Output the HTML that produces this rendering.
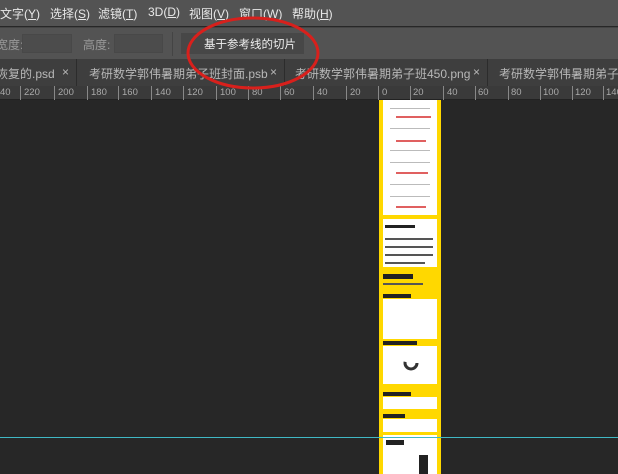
<!DOCTYPE html>
<html><head><meta charset="utf-8"><style>
*{margin:0;padding:0;box-sizing:border-box}
body{width:618px;height:474px;overflow:hidden;background:#272727;font-family:"Liberation Sans","Noto Sans CJK SC",sans-serif;position:relative}
.abs{position:absolute}
#menu{left:0;top:0;width:618px;height:26px;background:#535353;color:#e8e8e8;font-size:12px}
#menu span{position:absolute;top:5px}
#opt{left:0;top:27px;width:618px;height:32px;background:#535353;border-top:1px solid #444;color:#999;font-size:12px}
#tabs{left:0;top:59px;width:618px;height:27px;background:#3e3e3e;color:#b8b8b8;font-size:12px}
.tab{position:absolute;top:0;height:27px;border-right:1px solid #2c2c2c;padding:6px 0 0 0;white-space:nowrap}
#ruler{left:0;top:86px;width:618px;height:14px;background:#3a3a3a;border-bottom:1px solid #222;color:#aaa;font-size:9.5px}
#ruler span{position:absolute;top:1px}
.w{position:absolute;background:#fff}
.ln{position:absolute;height:1px;background:#bbb}
.r{position:absolute;height:2px;background:#e06060}
.k{position:absolute;background:#222}
</style></head><body>
<div id="menu" class="abs">
<span style="left:0">文字(<u>Y</u>)</span><span style="left:50px">选择(<u>S</u>)</span><span style="left:98px">滤镜(<u>T</u>)</span><span style="left:148px">3D(<u>D</u>)</span><span style="left:189px">视图(<u>V</u>)</span><span style="left:239px">窗口(<u>W</u>)</span><span style="left:292px">帮助(<u>H</u>)</span>
</div>
<div id="opt" class="abs">
<span class="abs" style="left:-4px;top:8px">宽度:</span>
<div class="abs" style="left:22px;top:6px;width:50px;height:19px;background:#4c4c4c;border:1px solid #484848"></div>
<span class="abs" style="left:83px;top:8px">高度:</span>
<div class="abs" style="left:114px;top:6px;width:49px;height:19px;background:#4c4c4c;border:1px solid #484848"></div>
<div class="abs" style="left:172px;top:4px;width:1px;height:24px;background:#444"></div>
<div class="abs" style="left:181px;top:5px;width:123px;height:21px;background:#474747;color:#eee;padding:3px 0 0 23px;font-size:11.5px">基于参考线的切片</div>
</div>
<div id="tabs" class="abs">
<div class="tab" style="left:-4px;width:81px">恢复的.psd <span style="position:absolute;left:66px">×</span></div>
<div class="tab" style="left:77px;width:208px;padding-left:12px">考研数学郭伟暑期弟子班封面.psb <span style="position:absolute;left:193px">×</span></div>
<div class="tab" style="left:285px;width:203px;padding-left:10px">考研数学郭伟暑期弟子班450.png <span style="position:absolute;left:188px">×</span></div>
<div class="tab" style="left:488px;width:210px;padding-left:11px">考研数学郭伟暑期弟子班</div>
</div>
<div id="ruler" class="abs">
<svg class="abs" style="left:0;top:0" width="618" height="14"><g stroke="#888" stroke-width="1">
<path d="M20.5 0V14M54.5 0V14M87.5 0V14M118.5 0V14M151.5 0V14M183.5 0V14M216.5 0V14M248.5 0V14M280.5 0V14M313.5 0V14M346.5 0V14M378.5 0V14M410.5 0V14M443.5 0V14M475.5 0V14M508.5 0V14M540.5 0V14M572.5 0V14M603.5 0V14"/></g></svg>
<span style="left:0">40</span><span style="left:24px">220</span><span style="left:58px">200</span><span style="left:91px">180</span><span style="left:122px">160</span><span style="left:155px">140</span><span style="left:187px">120</span><span style="left:220px">100</span><span style="left:252px">80</span><span style="left:284px">60</span><span style="left:317px">40</span><span style="left:350px">20</span><span style="left:382px">0</span><span style="left:413px">20</span><span style="left:447px">40</span><span style="left:478px">60</span><span style="left:511px">80</span><span style="left:543px">100</span><span style="left:575px">120</span><span style="left:606px">140</span>
</div>
<svg class="abs" style="left:184px;top:14px" width="140" height="80"><ellipse cx="69" cy="39" rx="65" ry="35" fill="none" stroke="#d8201c" stroke-width="3"/></svg>
<div class="abs" style="left:379px;top:100px;width:62px;height:374px;background:#ffd800"></div>
<div class="w" style="left:383px;top:100px;width:54px;height:115px"></div>
<div class="r" style="left:396px;top:116px;width:35px"></div><div class="r" style="left:396px;top:140px;width:30px"></div><div class="r" style="left:396px;top:172px;width:32px"></div><div class="r" style="left:396px;top:206px;width:30px"></div>
<div class="ln" style="left:390px;top:108px;width:40px"></div><div class="ln" style="left:390px;top:128px;width:40px"></div><div class="ln" style="left:390px;top:150px;width:40px"></div><div class="ln" style="left:390px;top:162px;width:40px"></div><div class="ln" style="left:390px;top:184px;width:40px"></div><div class="ln" style="left:390px;top:196px;width:40px"></div>
<div class="w" style="left:383px;top:219px;width:54px;height:48px"></div>
<div class="k" style="left:385px;top:225px;width:30px;height:3px"></div>
<div class="k" style="left:385px;top:238px;width:48px;height:2px;background:#555"></div><div class="k" style="left:385px;top:246px;width:48px;height:2px;background:#555"></div><div class="k" style="left:385px;top:254px;width:48px;height:2px;background:#555"></div><div class="k" style="left:385px;top:262px;width:40px;height:2px;background:#555"></div>
<div class="k" style="left:383px;top:274px;width:30px;height:5px"></div>
<div class="k" style="left:383px;top:283px;width:40px;height:2px;background:#555"></div>
<div class="k" style="left:383px;top:294px;width:28px;height:4px"></div>
<div class="w" style="left:383px;top:299px;width:54px;height:40px"></div>
<div class="k" style="left:383px;top:341px;width:34px;height:4px"></div>
<div class="w" style="left:383px;top:346px;width:54px;height:38px"></div>
<svg class="abs" style="left:403px;top:355px" width="16" height="16"><circle cx="8" cy="8" r="6" fill="none" stroke="#333" stroke-width="3" stroke-dasharray="20 18"/></svg>
<div class="k" style="left:383px;top:392px;width:28px;height:4px"></div>
<div class="w" style="left:383px;top:397px;width:54px;height:12px"></div>
<div class="k" style="left:383px;top:414px;width:22px;height:4px"></div>
<div class="w" style="left:383px;top:419px;width:54px;height:13px"></div>
<div class="w" style="left:383px;top:435px;width:54px;height:39px"></div>
<div class="k" style="left:386px;top:440px;width:18px;height:5px"></div>
<div class="k" style="left:419px;top:455px;width:9px;height:19px"></div>
<div class="abs" style="left:0;top:437px;width:618px;height:1px;background:#40b8c4"></div>
</body></html>
